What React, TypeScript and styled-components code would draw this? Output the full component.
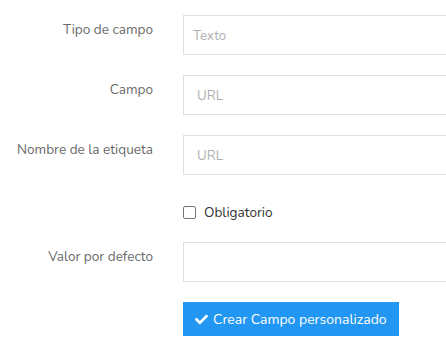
import React from "react"
import styled, { createGlobalStyle } from "styled-components"
import { FaCheck } from "react-icons/fa"

const GlobalStyle = createGlobalStyle`
  body {
    margin: 0;
    background: #fff;
    font-family: "Nunito", "Lato", "Noto Sans", sans-serif;
    overflow: hidden;
  }
`

const Form = styled.form`
  padding-top: 15px;
  width: 520px;
`

const Row = styled.div<{ $gap?: number }>`
  display: grid;
  grid-template-columns: 168px 1fr;
  margin-bottom: ${({ $gap = 20 }) => $gap}px;
`

const Label = styled.label`
  padding: 5px 15px 0 0;
  text-align: right;
  font-size: 13.6px;
  line-height: 20px;
  color: #6a6a6a;
`

const Field = styled.div`
  padding-left: 15px;
`

const Input = styled.input<{ $inset?: number }>`
  box-sizing: border-box;
  display: block;
  width: 100%;
  height: 40px;
  padding: 0 ${({ $inset = 13 }) => $inset}px;
  border: 1px solid #dcdfe6;
  border-radius: 0;
  font-family: inherit;
  font-size: 13.4px;
  color: #555;
  outline: none;

  &::placeholder {
    color: #b0b0b0;
  }
`

const Check = styled.label`
  display: flex;
  align-items: center;
  gap: 8px;
  height: 20px;
  margin-top: 7px;
  font-size: 13.6px;
  color: #333;
`

const Box = styled.span`
  box-sizing: border-box;
  width: 13px;
  height: 13px;
  border: 1px solid #767676;
  border-radius: 2px;
  background: #fff;
`

const Button = styled.button`
  display: inline-flex;
  align-items: center;
  gap: 5px;
  height: 34px;
  padding: 0 12px;
  border: none;
  border-radius: 0;
  background: #2196f3;
  color: #fff;
  font-family: inherit;
  font-size: 14px;
  cursor: pointer;

  svg {
    width: 13px;
    height: 13px;
  }
`

export default function App() {
  return (
    <>
      <GlobalStyle />
      <Form onSubmit={(e) => e.preventDefault()}>
        <Row>
          <Label>Tipo de campo</Label>
          <Field>
            <Input $inset={9} placeholder="Texto" />
          </Field>
        </Row>
        <Row>
          <Label>Campo</Label>
          <Field>
            <Input placeholder="URL" />
          </Field>
        </Row>
        <Row>
          <Label>Nombre de la etiqueta</Label>
          <Field>
            <Input placeholder="URL" />
          </Field>
        </Row>
        <Row $gap={20}>
          <div />
          <Field>
            <Check>
              <Box />
              Obligatorio
            </Check>
          </Field>
        </Row>
        <Row>
          <Label>Valor por defecto</Label>
          <Field>
            <Input />
          </Field>
        </Row>
        <Row>
          <div />
          <Field>
            <Button type="submit">
              <FaCheck />
              Crear Campo personalizado
            </Button>
          </Field>
        </Row>
      </Form>
    </>
  )
}
